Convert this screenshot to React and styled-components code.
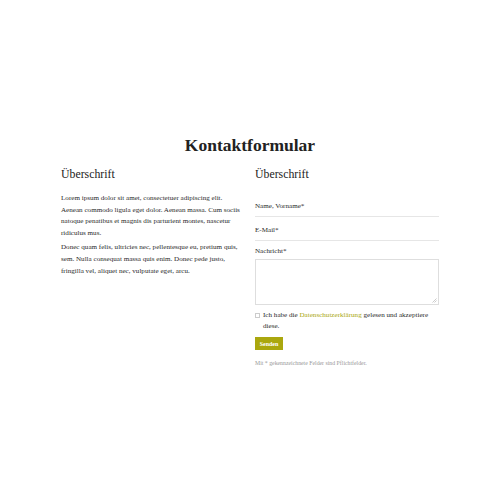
import React from 'react';
import styled, { createGlobalStyle } from 'styled-components';

const GlobalStyle = createGlobalStyle`
  html, body {
    margin: 0;
    padding: 0;
    background: #fff;
  }
  body {
    font-family: "Liberation Serif", "DejaVu Serif", serif;
    color: #2b2b2b;
    -webkit-font-smoothing: antialiased;
  }
`;

const Page = styled.div`
  width: 500px;
  height: 500px;
  padding-top: 134px;
  box-sizing: border-box;
`;

const Title = styled.h1`
  margin: 0 0 11px;
  text-align: center;
  font-size: 17.5px;
  font-weight: bold;
  color: #222;
  line-height: 22px;
`;

const Columns = styled.div`
  display: grid;
  grid-template-columns: 181px 184px;
  column-gap: 13px;
  width: 378px;
  margin: 0 auto;
`;

const Heading = styled.h2`
  margin: 0 0 12px;
  font-size: 11.8px;
  font-weight: normal;
  line-height: 14px;
  color: #222;
`;

const Text = styled.p`
  margin: 0 0 2.5px;
  font-size: 7.1px;
  line-height: 11.7px;
  color: #2a2a2a;
`;

const Form = styled.form`
  display: flex;
  flex-direction: column;
`;

const Field = styled.div`
  border-bottom: 1px solid #e6e6e6;
  padding: 8px 0 4px;
  font-size: 7.1px;
  line-height: 11px;
  color: #2a2a2a;
`;

const Label = styled.div`
  margin: 5px 0 2px;
  font-size: 7.1px;
  line-height: 11px;
  color: #2a2a2a;
`;

const TextArea = styled.div`
  position: relative;
  height: 44px;
  border: 1px solid #dedede;
  margin-bottom: 5px;
`;

const Grip = styled.svg`
  position: absolute;
  right: 1px;
  bottom: 1px;
`;

const Consent = styled.div`
  display: flex;
  align-items: flex-start;
  font-size: 7.1px;
  line-height: 11px;
  color: #2a2a2a;
`;

const Box = styled.span`
  flex: 0 0 auto;
  width: 3px;
  height: 3px;
  border: 1px solid #ccc;
  margin: 3px 3px 0 0;
`;

const Link = styled.span`
  color: #a9a710;
`;

const Button = styled.button`
  align-self: flex-start;
  margin-top: 5px;
  width: 28px;
  height: 13px;
  padding: 0;
  border: none;
  background: #aaa70e;
  color: #fff;
  font-family: inherit;
  font-size: 6px;
  font-weight: bold;
`;

const Note = styled.p`
  margin: 9px 0 0;
  font-size: 5.8px;
  line-height: 8px;
  color: #999;
`;

export default function App() {
  return (
    <Page>
      <GlobalStyle />
      <Title>Kontaktformular</Title>
      <Columns>
        <div>
          <Heading>Überschrift</Heading>
          <Text>
            Lorem ipsum dolor sit amet, consectetuer adipiscing elit. Aenean commodo
            ligula eget dolor. Aenean massa. Cum sociis natoque penatibus et magnis dis
            parturient montes, nascetur ridiculus mus.
          </Text>
          <Text>
            Donec quam felis, ultricies nec, pellentesque eu, pretium quis, sem. Nulla
            consequat massa quis enim. Donec pede justo, fringilla vel, aliquet nec,
            vulputate eget, arcu.
          </Text>
        </div>
        <Form>
          <Heading>Überschrift</Heading>
          <Field>Name, Vorname*</Field>
          <Field>E-Mail*</Field>
          <Label>Nachricht*</Label>
          <TextArea>
            <Grip width="5" height="5" viewBox="0 0 5 5">
              <path d="M4.5 0.5 L0.5 4.5 M4.5 2.5 L2.5 4.5" stroke="#aaa" strokeWidth="0.6" />
            </Grip>
          </TextArea>
          <Consent>
            <Box />
            <span>
              Ich habe die <Link>Datenschutzerklärung</Link> gelesen und akzeptiere
              diese.
            </span>
          </Consent>
          <Button type="button">Senden</Button>
          <Note>Mit * gekennzeichnete Felder sind Pflichtfelder.</Note>
        </Form>
      </Columns>
    </Page>
  );
}
